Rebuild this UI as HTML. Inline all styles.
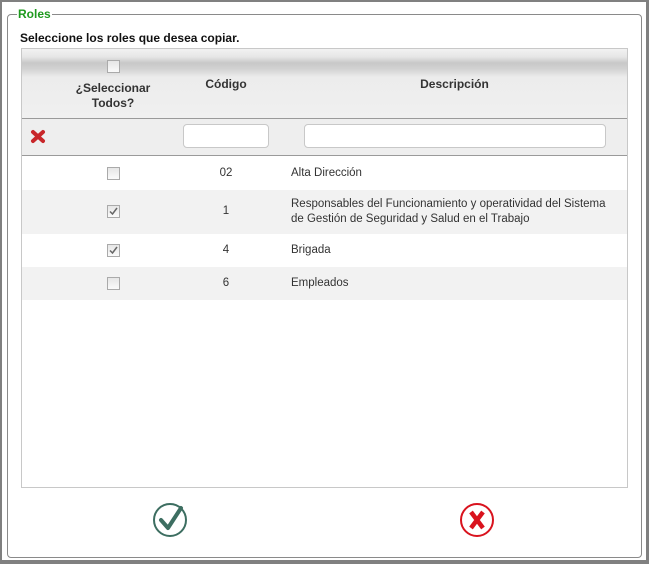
<!DOCTYPE html>
<html><head><meta charset="utf-8"><style>
*{margin:0;padding:0;box-sizing:border-box}
body{width:649px;height:564px;background:#fff;font-family:"Liberation Sans",Tahoma,sans-serif;position:relative;overflow:hidden}
.outer{position:absolute;left:0;top:0;width:649px;height:564px;border-style:solid;border-color:#808080;border-width:2px 3px 4px 2px}
.fs{position:absolute;left:7px;top:14px;width:635px;height:544px;border:1px solid #8a8a8a;border-radius:4px}
.lg{position:absolute;left:17px;top:7px;background:#fff;padding:0 1px;color:#1e9a1e;font-weight:bold;font-size:12px}
.ins{position:absolute;left:20px;top:31px;font-size:12px;font-weight:bold;color:#111}
.box{position:absolute;left:21px;top:48px;width:607px;height:440px;border:1px solid #c8c8c8}
.hd{position:absolute;left:0;top:0;width:605px;height:70px;background:linear-gradient(#f2f2f2 0px,#e6e6e6 8px,#c8c8c8 14px,#d2d2d2 20px,#ececec 28px,#f0f0f0 70px);border-bottom:1px solid #9a9a9a;font-size:12px;font-weight:bold;color:#333}
.flt{position:absolute;left:0;top:70px;width:605px;height:37px;background:#eeeeee;border-bottom:1px solid #9a9a9a}
.in{position:absolute;top:5px;height:24px;background:#fff;border:1px solid #c8c8c8;border-radius:4px}
.cb{position:absolute;width:13px;height:13px;border:1px solid #aaa;background:linear-gradient(#e6e6e6,#fafafa)}
.row{position:absolute;left:0;width:605px;font-size:11.5px;color:#333}
.t{position:absolute}
</style></head><body>
<div class="outer"></div>
<div class="fs"></div>
<div class="lg">Roles</div>
<div class="ins">Seleccione los roles que desea copiar.</div>
<div class="box">
 <div class="hd">
  <div class="cb" style="left:85px;top:11px"></div>
  <div class="t" style="left:40px;top:32px;width:102px;text-align:center;line-height:15px">¿Seleccionar<br>Todos?</div>
  <div class="t" style="left:160px;top:28px;width:88px;text-align:center">Código</div>
  <div class="t" style="left:280px;top:28px;width:305px;text-align:center">Descripción</div>
 </div>
 <div class="flt">
  <svg style="position:absolute;left:8px;top:10px" width="16" height="15" viewBox="0 0 16 15"><path d="M3 3 L13 12 M13 3 L3 12" stroke="#c8262a" stroke-width="4" stroke-linecap="round"/></svg>
  <div class="in" style="left:161px;width:86px"></div>
  <div class="in" style="left:282px;width:302px"></div>
 </div>
 <div class="row" style="top:108px;height:33px;background:#fff">
  <div class="cb" style="left:85px;top:10px"></div>
  <div class="t" style="left:160px;top:10px;width:88px;text-align:center">02</div>
  <div class="t" style="left:269px;top:10px">Alta Dirección</div>
 </div>
 <div class="row" style="top:141px;height:44px;background:#f2f2f2">
  <div class="cb" style="left:85px;top:15px"><svg width="11" height="11" viewBox="0 0 11 11" style="position:absolute;left:0;top:0"><path d="M2 5.5 L4.5 8 L9 2" stroke="#666" stroke-width="1.5" fill="none"/></svg></div>
  <div class="t" style="left:160px;top:15px;width:88px;text-align:center">1</div>
  <div class="t" style="left:269px;top:7px;line-height:15px">Responsables del Funcionamiento y operatividad del Sistema<br>de Gestión de Seguridad y Salud en el Trabajo</div>
 </div>
 <div class="row" style="top:185px;height:33px;background:#fff">
  <div class="cb" style="left:85px;top:10px"><svg width="11" height="11" viewBox="0 0 11 11" style="position:absolute;left:0;top:0"><path d="M2 5.5 L4.5 8 L9 2" stroke="#666" stroke-width="1.5" fill="none"/></svg></div>
  <div class="t" style="left:160px;top:10px;width:88px;text-align:center">4</div>
  <div class="t" style="left:269px;top:10px">Brigada</div>
 </div>
 <div class="row" style="top:218px;height:33px;background:#f2f2f2">
  <div class="cb" style="left:85px;top:10px"></div>
  <div class="t" style="left:160px;top:10px;width:88px;text-align:center">6</div>
  <div class="t" style="left:269px;top:10px">Empleados</div>
 </div>
</div>
<svg style="position:absolute;left:153px;top:502px" width="36" height="36" viewBox="0 0 36 36"><circle cx="17" cy="18" r="16" fill="none" stroke="#3d6e61" stroke-width="2"/><path d="M8 18 L15 26 L28 6" fill="none" stroke="#3d6e61" stroke-width="4" stroke-linecap="round" stroke-linejoin="round"/></svg>
<svg style="position:absolute;left:459px;top:502px" width="36" height="36" viewBox="0 0 36 36"><circle cx="18" cy="18" r="16" fill="none" stroke="#d9131e" stroke-width="2"/><path d="M12 10 L24 26 M24 10 L12 26" stroke="#d9131e" stroke-width="4.5"/></svg>
</body></html>
